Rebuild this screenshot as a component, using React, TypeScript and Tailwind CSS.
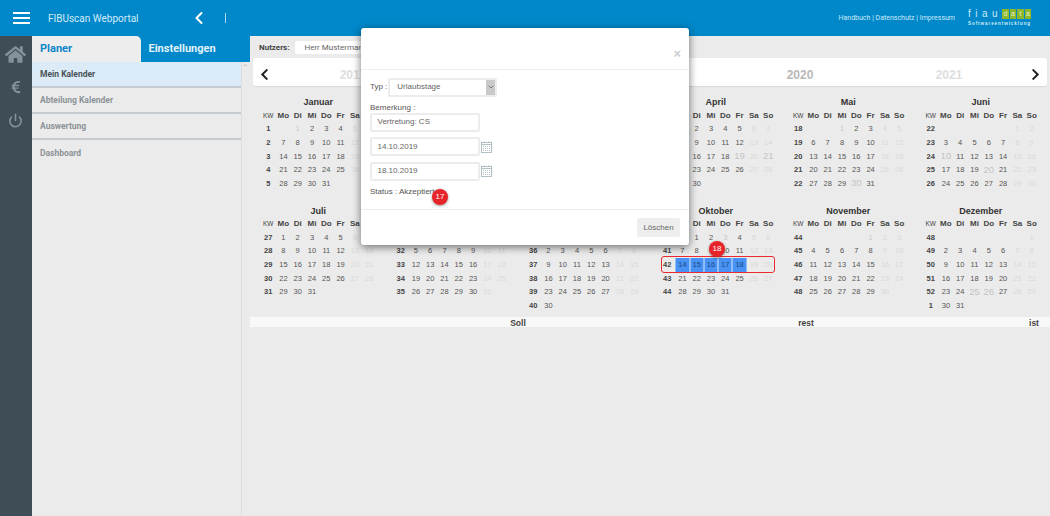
import React from 'react';
import { FaHome, FaEuroSign, FaChevronLeft, FaChevronRight } from 'react-icons/fa';
import { Power, ChevronLeft, ChevronDown } from 'lucide-react';

const MONTHS = ['Januar', 'Februar', 'März', 'April', 'Mai', 'Juni', 'Juli', 'August', 'September', 'Oktober', 'November', 'Dezember'];
const WEEKDAYS = ['Mo', 'Di', 'Mi', 'Do', 'Fr', 'Sa', 'So'];

// Feiertage 2019 (Monat-Tag)
const HOLIDAYS = ['0-1', '4-1', '9-3', '10-1'];
const HOLIDAYS_BIG = ['3-19', '3-21', '3-22', '4-30', '5-10', '5-20', '11-25', '11-26'];

function isoWeek(d: Date) {
  const t = new Date(Date.UTC(d.getFullYear(), d.getMonth(), d.getDate()));
  const day = t.getUTCDay() || 7;
  t.setUTCDate(t.getUTCDate() + 4 - day);
  const start = new Date(Date.UTC(t.getUTCFullYear(), 0, 1));
  return Math.ceil(((t.getTime() - start.getTime()) / 86400000 + 1) / 7);
}

function weeksOf(month: number) {
  const weeks: { kw: number; days: (number | null)[] }[] = [];
  const last = new Date(2019, month + 1, 0).getDate();
  let row: (number | null)[] = Array(7).fill(null);
  let kw = 0;
  for (let n = 1; n <= last; n++) {
    const date = new Date(2019, month, n);
    const col = (date.getDay() + 6) % 7;
    if (!kw) kw = isoWeek(date);
    row[col] = n;
    if (col === 6 || n === last) {
      weeks.push({ kw, days: row });
      row = Array(7).fill(null);
      kw = 0;
    }
  }
  return weeks;
}

function Day({ month, day, col }: { month: number; day: number | null; col: number }) {
  if (day === null) return <span />;
  const key = `${month}-${day}`;
  const weekend = col > 4;
  const selected = month === 9 && day >= 14 && day <= 18;
  let cls = 'text-[#555]';
  if (weekend) cls = 'text-[#d9d9d9]';
  if (HOLIDAYS.includes(key)) cls = 'text-[#c8c8c8]';
  if (HOLIDAYS_BIG.includes(key)) cls = 'text-[#c4c4c4] text-[9.5px]';
  if (selected) cls = 'bg-[#4792f4] text-[#1e4a80] border-x border-[#8fbdf5]';
  return <span className={`flex h-[13.7px] items-center justify-center ${cls}`}>{day}</span>;
}

function Month({ month }: { month: number }) {
  const shifted = month === 3 || month === 9;
  return (
    <div className="min-h-[108.5px] w-[132.5px] flex flex-col items-center">
      <div className="h-[13px] text-[9px] leading-[13px] font-bold text-[#333]">{MONTHS[month]}</div>
      <div className={`w-[116px] text-[7.5px] ${shifted ? 'ml-[3px]' : ''}`}>
        <div className="grid h-[13px] grid-cols-[16px_repeat(7,14.3px)] items-center text-center text-[8px] font-bold text-[#444]">
          <span className="text-[6.5px] font-normal">KW</span>
          {WEEKDAYS.map((w) => <span key={w}>{w}</span>)}
        </div>
        {weeksOf(month).map((w) => (
          <div key={w.kw} className="relative grid h-[13.7px] grid-cols-[16px_repeat(7,14.3px)] items-center text-center">
            <span className="font-bold text-[#444]">{w.kw}</span>
            {w.days.map((d, i) => <Day key={i} month={month} day={d} col={i} />)}
            {month === 9 && w.kw === 42 && (
              <div className="absolute left-[1.5px] top-[-1.5px] h-[17px] w-[114.5px] rounded-[3px] border-[1.5px] border-[#ea2a2f]" />
            )}
          </div>
        ))}
      </div>
    </div>
  );
}

function Badge({ n, className }: { n: number; className: string }) {
  return (
    <div className={`absolute flex h-[16px] w-[16px] items-center justify-center rounded-full bg-[#e8242b] text-[8px] text-white shadow-[0_1px_3px_rgba(0,0,0,0.4)] ${className}`}>
      {n}
    </div>
  );
}

function CalendarIcon() {
  return (
    <svg width="11" height="12" viewBox="0 0 11 12" fill="none" stroke="#9fb0b8" strokeWidth="0.8">
      <rect x="0.5" y="1.5" width="10" height="10" />
      <path d="M0.5 3.5H10.5M3 0.5V2M8 0.5V2" />
      <path d="M2.5 5V10M4.5 5V10M6.5 5V10M8.5 5V10" strokeDasharray="1 1" />
    </svg>
  );
}

function Field({ value, icon }: { value: string; icon?: boolean }) {
  return (
    <div className="flex items-center">
      <div className="flex h-[19px] w-[109.5px] items-center rounded-[2px] border-2 border-[#ececec] px-[5.5px] text-[#666]">{value}</div>
      {icon && <span className="ml-[1px] flex"><CalendarIcon /></span>}
    </div>
  );
}

function Dialog() {
  return (
    <div className="absolute left-[361px] top-[28px] z-10 flex h-[217px] w-[328px] flex-col rounded-[3px] bg-white text-[8px] text-[#555] shadow-[0_2px_8px_rgba(0,0,0,0.55)]">
      <div className="relative h-[41.5px] border-b border-[#eeeeee]">
        <span className="absolute right-[8px] top-[19px] text-[13px] leading-[14px] font-bold text-[#ccc]">×</span>
      </div>
      <div className="relative flex-1 border-b border-[#eeeeee] pl-[9px] pt-[8px]">
        <div className="flex items-center gap-[1px]">
          <span>Typ :</span>
          <div className="flex h-[19px] w-[109px] items-center justify-between rounded-[2px] border-2 border-[#ececec] pl-[7px] text-[#666]">
            Urlaubstage
            <span className="flex h-full w-[9px] items-center justify-center bg-[#c9c9c9] text-[#555]"><ChevronDown size={8} strokeWidth={2} /></span>
          </div>
        </div>
        <div className="mt-[5px] h-[11px] leading-[11px]">Bemerkung :</div>
        <div className="flex flex-col gap-[5.5px]">
          <Field value="Vertretung: CS" />
          <Field value="14.10.2019" icon />
          <Field value="18.10.2019" icon />
        </div>
        <div className="mt-[5px] leading-[12px]">Status : Akzeptiert</div>
        <Badge n={17} className="left-[71px] top-[119px]" />
      </div>
      <div className="flex h-[35px] items-center justify-end pr-[9px]">
        <button className="h-[19px] w-[43px] rounded-[2px] bg-[#eeeeee] text-[8px] text-[#666]">Löschen</button>
      </div>
    </div>
  );
}

export default function App() {
  return (
    <div className="relative flex h-[516px] w-[1050px] flex-col overflow-hidden bg-[#ebebeb] font-['Liberation_Sans',Arial,sans-serif]">
      {/* HEADER */}
      <header className="flex h-[36px] shrink-0 items-center bg-[#0088ca]">
        <div className="ml-[13px] flex w-[17px] flex-col gap-[2.5px]">
          <span className="h-[2.5px] bg-white" />
          <span className="h-[2.5px] bg-white" />
          <span className="h-[2.5px] bg-white" />
        </div>
        <span className="ml-[18px] w-[90px] whitespace-nowrap font-['Roboto',sans-serif] text-[10px] text-[#d4ebf8]">FIBUscan Webportal</span>
        <ChevronLeft className="ml-[51px] text-white" size={20} strokeWidth={2.5} />
        <span className="ml-[16px] h-[10px] w-px bg-[#a9d8f1]" />
        <nav className="ml-auto font-['Roboto',sans-serif] text-[7px] text-[#cfe9f7]">Handbuch | Datenschutz | Impressum</nav>
        <div className="ml-[13px] mr-[19px] flex w-[63px] flex-col items-stretch">
          <div className="flex h-[10px] items-center justify-between">
            <span className="text-[10px] leading-[10px] tracking-[4.5px] text-[#cfe9f7]">fiau</span>
            <div className="flex gap-px text-[7px] leading-[10px] text-[#e8f0c8]">
              {['d', 'a', 't', 'a'].map((c, i) => (
                <span key={i} className="flex h-[10px] w-[6.5px] justify-center bg-[#8db82c]">{c}</span>
              ))}
            </div>
          </div>
          <span className="mt-[2px] text-[4.5px] leading-[6px] font-bold tracking-[0.95px] whitespace-nowrap text-[#d4ebf8]">Softwareentwicklung</span>
        </div>
      </header>

      <div className="flex min-h-0 flex-1">
        {/* RAIL */}
        <aside className="flex w-[31.5px] shrink-0 flex-col items-center bg-[#3f4d56] pt-[8px] text-[#84929a]">
          <FaHome size={21} />
          <FaEuroSign size={14} className="mt-[15px]" />
          <Power size={15} strokeWidth={2.5} className="mt-[19px]" />
        </aside>

        {/* SUBMENU */}
        <div className="flex w-[218.5px] shrink-0 flex-col">
          <div className="flex h-[26px] shrink-0 bg-[#0088ca] font-['Roboto',sans-serif] text-[11px] font-bold">
            <div className="flex w-[109px] items-center rounded-tr-[5px] bg-[#ededed] pl-[8.5px] text-[#0f86c9]">Planer</div>
            <div className="flex flex-1 items-center pl-[8px] text-[#e3f2fb]">Einstellungen</div>
          </div>
          <div className="flex flex-1 bg-[#ebebeb]">
            <ul className="w-[210px] border-r border-[#dddddd] font-['Roboto',sans-serif] text-[8.5px] font-bold text-[#8b9398]">
              <li className="flex h-[26px] items-center border-b-2 border-[#c6ccd1] bg-[#dcebf8] pl-[8.5px] text-[#4a5359]">Mein Kalender</li>
              <li className="flex h-[26px] items-center border-b-2 border-[#c6ccd1] pl-[8.5px]">Abteilung Kalender</li>
              <li className="flex h-[26px] items-center border-b-2 border-[#c6ccd1] pl-[8.5px]">Auswertung</li>
              <li className="flex h-[26px] items-center pl-[8.5px]">Dashboard</li>
            </ul>
            <div className="flex w-[8.5px] justify-center pt-[2px] text-[8px] leading-[8px] text-[#b5b5b5]">⌃</div>
          </div>
        </div>

        {/* CONTENT */}
        <main className="relative min-w-0 flex-1 pt-[5px]">
          <div className="flex h-[13px] items-center pl-[9px] font-['Roboto',sans-serif] text-[8px]">
            <span className="font-bold text-[#444]">Nutzers:</span>
            <div className="ml-[6px] flex h-[13px] w-[120px] items-center rounded-[2px] bg-white pl-[9px] text-[#666]">Herr Mustermann</div>
          </div>
          <div className="relative ml-[3px] mt-[4px] flex h-[28px] w-[794px] items-center rounded-[3px] bg-white pl-[25.5px] pr-[23.5px] shadow-[0_1px_1px_rgba(0,0,0,0.08)]">
            <FaChevronLeft size={13} className="absolute left-[5px] top-[10px] text-[#222]" />
            {[2017, 2018, 2019, 2020, 2021].map((y) => (
              <span key={y} className={`flex w-[149px] justify-center pt-[6px] text-[12px] font-bold ${y === 2020 ? 'text-[#b8b8b8]' : 'text-[#dedede]'}`}>{y}</span>
            ))}
            <FaChevronRight size={13} className="absolute right-[5px] top-[10px] text-[#222]" />
          </div>

          <div className="ml-[2px] mt-[10px] grid w-[795px] grid-cols-6">
            {MONTHS.map((m, i) => <Month key={m} month={i} />)}
          </div>

          <div className="mt-[4px] grid h-[10px] grid-cols-[536px_40px_1fr] items-center bg-[#f8f8f8] text-center text-[8.5px] font-bold text-[#444]">
            <span>Soll</span>
            <span>rest</span>
            <span className="pl-[192px] text-center">ist</span>
          </div>
          <Badge n={18} className="left-[459px] top-[205px] z-[5]" />
        </main>
      </div>

      <Dialog />
    </div>
  );
}
